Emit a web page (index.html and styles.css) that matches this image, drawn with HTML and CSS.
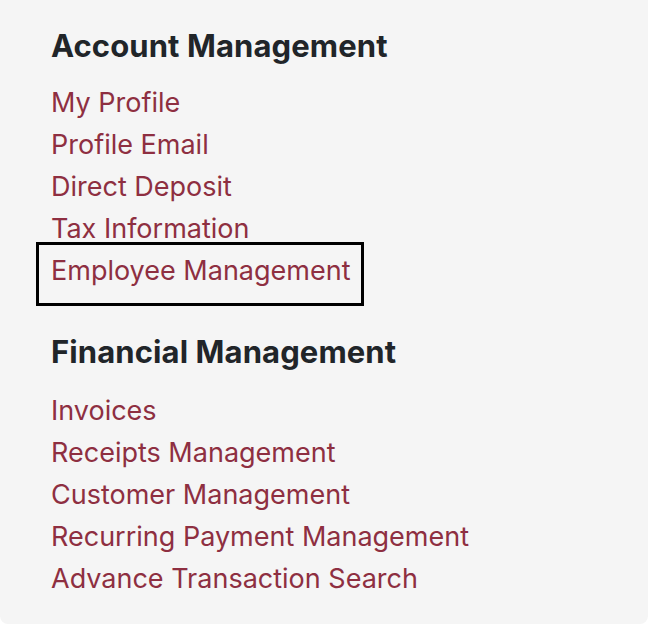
FILE: index.html
```html
<!DOCTYPE html>
<html lang="en">
<head>
    <meta charset="UTF-8">
    <meta name="viewport" content="width=device-width, initial-scale=1.0">
    <title>Account Settings</title>
    <link rel="stylesheet" href="styles.css">
</head>
<body>
    <div class="panel">
        <section class="group">
            <h2>Account Management</h2>
            <ul class="links">
                <li><a href="#">My Profile</a></li>
                <li><a href="#">Profile Email</a></li>
                <li><a href="#">Direct Deposit</a></li>
                <li><a href="#">Tax Information</a></li>
                <li class="active"><a href="#">Employee Management</a></li>
            </ul>
        </section>

        <section class="group">
            <h2>Financial Management</h2>
            <ul class="links">
                <li><a href="#">Invoices</a></li>
                <li><a href="#">Receipts Management</a></li>
                <li><a href="#">Customer Management</a></li>
                <li><a href="#">Recurring Payment Management</a></li>
                <li><a href="#">Advance Transaction Search</a></li>
            </ul>
        </section>
    </div>
</body>
</html>
```

FILE: styles.css
```css
body {
    margin: 0;
    padding: 0;
    background-color: #ffffff;
    font-family: Inter, "Noto Sans", sans-serif;
}

.panel {
    height: 624px;
    box-sizing: border-box;
    padding: 25px 0 0 51px;
    background-color: #f5f5f5;
    border-radius: 0 0 8px 8px;
}

.group h2 {
    margin: 0;
    font-size: 31px;
    font-weight: 700;
    line-height: 42px;
    letter-spacing: 0.1px;
    color: #212529;
}

.links {
    list-style: none;
    margin: 15px 0 0 0;
    padding: 0;
}

.group + .group .links {
    margin-top: 17px;
}

.links li {
    font-size: 27px;
    line-height: 42px;
}

.links a {
    color: #8e2f41;
    text-decoration: none;
}

/* focused link gets a box drawn around it */
.links li.active a {
    display: inline-block;
    padding: 5px 11px 11px 12px;
    margin: -8px -14px -14px -15px;
    border: 3px solid #000000;
}

.group + .group {
    margin-top: 39px;
}
```
